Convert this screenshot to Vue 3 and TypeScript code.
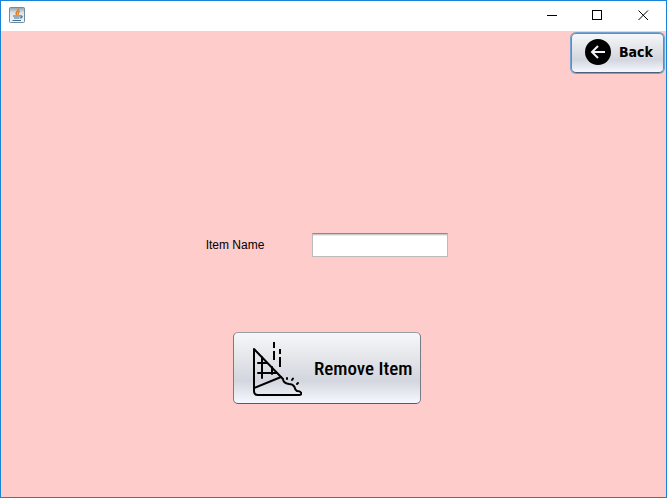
<script setup lang="ts">
import { ref } from 'vue'

const itemName = ref<string>('')

function removeItem(): void {
  itemName.value = ''
}
</script>

<template>
  <div class="window">
    <header class="titlebar">
      <svg class="app-icon" viewBox="0 0 16 16" aria-hidden="true">
        <defs>
          <linearGradient id="tile" x1="0" y1="0" x2="0" y2="1">
            <stop offset="0" stop-color="#8fa3b2" />
            <stop offset="0.35" stop-color="#dde4e8" />
            <stop offset="1" stop-color="#f3f6f7" />
          </linearGradient>
        </defs>
        <rect x="0.5" y="0.5" width="15" height="15" rx="1" fill="url(#tile)" stroke="#6f8ba1" />
        <path d="M9.500 1.500C10.500 4 5.500 4.500 7.500 8M10.800 4.200C8 5.500 10 6.500 8.800 8" fill="none" stroke="#e67817" stroke-width="1.400" />
        <path d="M4 9H11M5 11H10.500M3.500 13.500H12M11 9C14 8.500 13.500 11 11 11" fill="none" stroke="#456f92" stroke-width="1.200" />
      </svg>
      <div class="controls">
        <button type="button" class="control" aria-label="Minimize">
          <svg viewBox="0 0 11 11"><path d="M1 5.500H11" /></svg>
        </button>
        <button type="button" class="control" aria-label="Maximize">
          <svg viewBox="0 0 11 11"><path d="M0.500 0.500H9.500V9.500H0.500Z" /></svg>
        </button>
        <button type="button" class="control" aria-label="Close">
          <svg class="smooth" viewBox="0 0 11 11"><path d="M0.500 0.500L10 10M10 0.500L0.500 10" /></svg>
        </button>
      </div>
    </header>

    <main class="content">
      <nav class="toolbar">
        <button type="button" class="push back">
          <svg class="back-icon" viewBox="0 0 26 26" aria-hidden="true">
            <circle cx="13" cy="13" r="13" />
            <path d="M20 13H7M13 7L7 13L13 19" fill="none" stroke="#f1f2f5" stroke-width="2" />
          </svg>
          <span>Back</span>
        </button>
      </nav>

      <form class="form" @submit.prevent="removeItem">
        <div class="field">
          <label for="item-name">Item Name</label>
          <input id="item-name" v-model="itemName" type="text" autocomplete="off" />
        </div>
        <button type="submit" class="push remove">
          <svg class="remove-icon" viewBox="0 0 50 56" aria-hidden="true">
            <g fill="none" stroke="#000" stroke-width="2" stroke-linejoin="round" stroke-linecap="round">
              <path d="M2 9V51Q2 55 6 55H47Q50 55 49 52.500Q48 51 45 51Q43 50 42.500 47Q41 44 37 44Q31 43 31 39L29 37Z" />
              <path d="M2 48L29 37M10 17V38M20 27V34M6 23H15M6 33H24" />
              <path d="M22 2V8M22 11V20M28 9V14M28 17V27" stroke-linecap="butt" />
              <path d="M35 38V39M41 38.500L40 40M46 43L45 44" />
            </g>
          </svg>
          <span>Remove Item</span>
        </button>
      </form>
    </main>
  </div>
</template>

<style>
body {
  margin: 0;
}
</style>

<style scoped>
.window {
  box-sizing: border-box;
  min-height: 100vh;
  display: flex;
  flex-direction: column;
  border: 1px solid #1883d7;
  background: #ffcccc;
  color: #000;
  font-family: "Liberation Sans", sans-serif;
}

.titlebar {
  display: flex;
  justify-content: space-between;
  height: 30px;
  padding-left: 8px;
  background: #fff;
}

.app-icon {
  width: 16px;
  height: 16px;
  margin-top: 6px;
}

.controls {
  display: flex;
}

.control {
  display: flex;
  align-items: center;
  justify-content: center;
  width: 46px;
  padding: 0 0 2px;
  border: 0;
  background: transparent;
}

.control svg {
  width: 11px;
  height: 11px;
  fill: none;
  stroke: #000;
  stroke-width: 1;
  shape-rendering: crispEdges;
}

.control .smooth {
  shape-rendering: auto;
}

.content {
  flex: 1;
}

.toolbar {
  display: flex;
  justify-content: flex-end;
  padding: 2px;
}

.push {
  box-sizing: border-box;
  display: flex;
  align-items: center;
  border: 1px solid;
  border-color: #9a9da3 #777b84 #555a65;
  border-radius: 5px;
  background: linear-gradient(#f6f7f9 0%, #dfe1e6 45%, #d3d6de 68%, #f5f8fe 100%);
  color: #000;
}

.back {
  gap: 8px;
  width: 93px;
  height: 40px;
  padding: 0 0 2px 13px;
  border-color: #6d89a8 #6d89a8 #4c5f78;
  box-shadow: 0 0 0 1px #73a4d1;
  font: bold 14px "DejaVu Sans Condensed", "DejaVu Sans", sans-serif;
}

.back-icon {
  width: 26px;
  height: 26px;
}

.form {
  display: flex;
  flex-direction: column;
  align-items: center;
  gap: 75px;
  padding: 158px 13px 0 0;
}

.field {
  display: flex;
  align-items: center;
  gap: 48px;
}

.field label {
  font-size: 12px;
  line-height: 16px;
}

.field input {
  box-sizing: border-box;
  width: 136px;
  height: 24px;
  padding: 2px 6px;
  border: 1px solid #bbb;
  border-top-color: #8a8b8e;
  border-radius: 0;
  outline: 0;
  background: #fff;
  box-shadow: inset 0 1px #c9c9c9, inset 0 2px #ebebeb;
  font: 12px "Liberation Sans", sans-serif;
}

.remove {
  gap: 12px;
  width: 188px;
  height: 72px;
  padding: 0 0 0 18px;
  font: 500 19px "Roboto Condensed", "Open Sans Condensed", "DejaVu Sans Condensed", sans-serif;
}

.remove-icon {
  flex: none;
  width: 50px;
  height: 56px;
}

.remove span {
  white-space: nowrap;
}
</style>
